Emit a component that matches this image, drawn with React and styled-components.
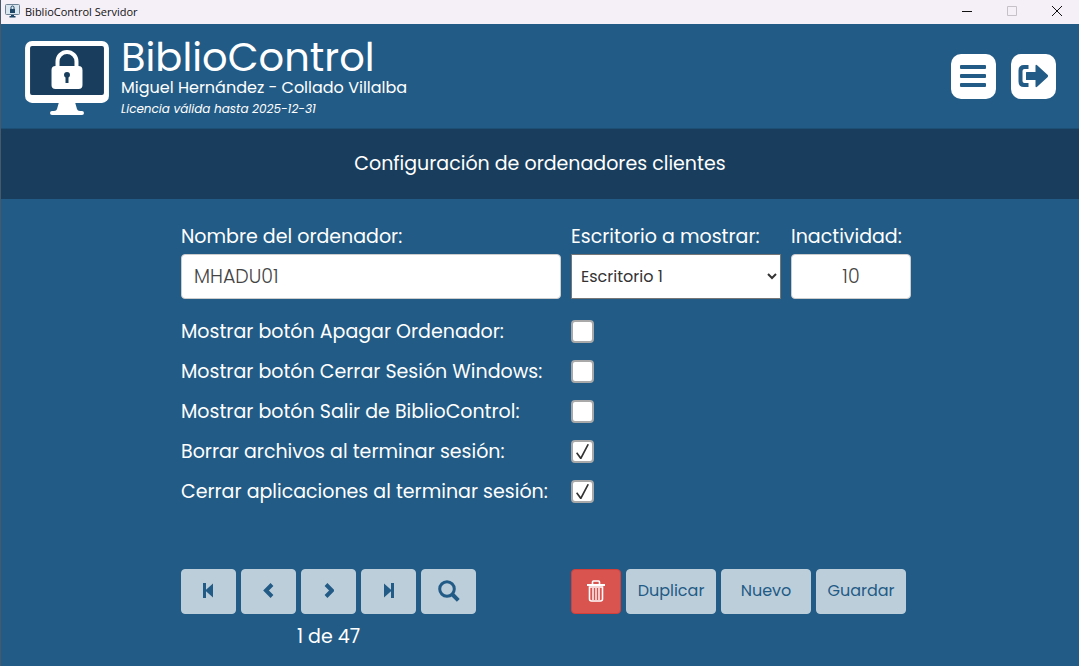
import React, { useState } from "react";
import styled, { createGlobalStyle } from "styled-components";

const GlobalStyle = createGlobalStyle`
  * {
    box-sizing: border-box;
  }

  body {
    margin: 0;
    background-color: #225b85;
    color: #ffffff;
    font-family: Poppins, Inter, "Open Sans", sans-serif;
  }

  button, input, select {
    font-family: inherit;
  }
`;

const Window = styled.div`
  min-height: 100vh;
  border-left: 1px solid #46586a;
  background-color: #225b85;
`;

const TitleBar = styled.div`
  height: 24px;
  padding: 0 0 2px 4px;
  display: flex;
  align-items: center;
  background-color: #f5eff7;
  color: #111111;
`;

const TitleText = styled.span`
  flex-grow: 1;
  margin-left: 5px;
  font-family: "Segoe UI", "Open Sans", "Noto Sans", sans-serif;
  font-size: 11px;
`;

const WindowButton = styled.button`
  width: 45px;
  height: 22px;
  padding: 0;
  display: flex;
  align-items: center;
  justify-content: center;
  border: none;
  background: none;
  color: ${({ disabled }) => (disabled ? "#c6c0c8" : "#111111")};
`;

const Header = styled.header`
  height: 105px;
  padding: 4px 23px 0 24px;
  display: flex;
  align-items: center;
  border-bottom: 1px solid #1d4f75;
`;

const Brand = styled.div`
  flex-grow: 1;
  margin-left: 12px;
`;

const BrandName = styled.h1`
  margin: 0;
  font-size: 40px;
  font-weight: 400;
  line-height: 42px;
`;

const Library = styled.p`
  margin: 0;
  font-size: 16px;
  line-height: 20px;
`;

const License = styled.p`
  margin: 0;
  font-size: 12px;
  font-style: italic;
  line-height: 22px;
`;

const HeaderActions = styled.nav`
  display: flex;
  gap: 15px;
  padding-bottom: 4px;
`;

const HeaderButton = styled.button`
  width: 45px;
  height: 45px;
  padding: 0 1px 0 0;
  display: flex;
  align-items: center;
  justify-content: center;
  border: none;
  border-radius: 10px;
  background-color: #ffffff;
  color: #225b85;
  cursor: pointer;
`;

const SectionTitle = styled.h2`
  height: 70px;
  margin: 0;
  padding-bottom: 2px;
  display: flex;
  align-items: center;
  justify-content: center;
  background-color: #193e5d;
  font-size: 19px;
  font-weight: 400;
`;

const Form = styled.form`
  max-width: 750px;
  margin: 0 auto;
  padding: 25px 4px 0 16px;
`;

const Fields = styled.div`
  display: grid;
  grid-template-columns: 38fr 21fr 12fr;
  gap: 10px;
`;

const Label = styled.label`
  font-size: 19px;
  line-height: 26px;
  white-space: nowrap;
`;

const Field = styled.div`
  min-width: 0;
  display: flex;
  flex-direction: column;
  gap: 4px;
`;

const TextInput = styled.input`
  width: 100%;
  height: 45px;
  padding: 0 12px;
  border: 1px solid #cccccc;
  border-radius: 4px;
  background-color: #ffffff;
  color: #444444;
  font-size: 19px;
  font-weight: 300;
  text-align: ${({ $align }) => $align || "left"};
`;

const Select = styled.select`
  width: 100%;
  height: 45px;
  padding: 0 0 0 5px;
  border: 1px solid #767676;
  border-radius: 0;
  background-color: #ffffff;
  color: #333333;
  font-size: 16px;
`;

const Options = styled.div`
  margin-top: 13px;
`;

const OptionRow = styled.div`
  height: 40px;
  padding-bottom: 1px;
  display: grid;
  grid-template-columns: 38fr 34fr;
  gap: 10px;
  align-items: center;
`;

const Checkbox = styled.input`
  appearance: none;
  width: 23px;
  height: 23px;
  margin: 0;
  display: grid;
  place-items: center;
  border: 2px solid #a9a9a9;
  border-radius: 4px;
  background-color: #ffffff;

  &:checked::before {
    content: "";
    width: 13px;
    height: 15px;
    background-color: #333333;
    clip-path: polygon(0 62%, 10% 55%, 36% 85%, 88% 0, 100% 3%, 42% 100%, 32% 100%);
  }
`;

const Footer = styled.div`
  margin-top: 57px;
  display: grid;
  grid-template-columns: 38fr 34fr;
  gap: 10px;
  align-items: start;
`;

const ButtonGroup = styled.div`
  display: flex;
  gap: 5px;
`;

const Button = styled.button`
  width: ${({ $width }) => $width || "90px"};
  height: 45px;
  padding: 0 0 2px;
  display: flex;
  align-items: center;
  justify-content: center;
  border: 1px solid ${({ $danger }) => ($danger ? "#d43f3a" : "#bdcedb")};
  border-radius: 4px;
  background-color: ${({ $danger }) => ($danger ? "#d9534f" : "#bdcedb")};
  color: ${({ $danger }) => ($danger ? "#ffffff" : "#225b85")};
  font-size: 16px;
  cursor: pointer;
`;

const Pager = styled.div`
  width: 295px;
`;

const Position = styled.p`
  margin: 10px 0 0;
  font-size: 19px;
  line-height: 26px;
  text-align: center;
`;

const Logo = ({ size, frame, screen }) => (
  <svg width={size} height={size * 0.88} viewBox="0 0 84 74" aria-hidden="true">
    <rect width="84" height="62" rx="7" fill={frame} />
    <rect x="5" y="5" width="74" height="49" rx="2" fill={screen} />
    <path d="M34 61h16l2 7q.5 2 3 2h2q2 0 2 2t-2 2H27q-2 0-2-2t2-2h2q2.500 0 3-2z" fill={frame} />
    <path d="M32.500 26v-5.500a9.500 9.500 0 0 1 19 0V26" fill="none" stroke={frame} strokeWidth="4" />
    <rect x="26.500" y="25" width="31" height="23" rx="4" fill={frame} />
    <path d="M42 31a3 3 0 0 0-3 3q0 1.600 1.500 2.600V42h3v-5.400Q45 35.600 45 34a3 3 0 0 0-3-3z" fill={screen} />
  </svg>
);

const SmallLogo = () => (
  <svg width="15" height="14" viewBox="0 0 15 14" aria-hidden="true">
    <rect x=".5" y=".5" width="14" height="10" rx="1" fill="#d9e6f0" stroke="#6d8294" />
    <path d="M6 5V3.500a1.500 1.500 0 0 1 3 0V5" fill="none" stroke="#1f4566" />
    <path d="M5 5h5v4H5zM6 11h3v1h1.500v1.500h-6V12H6z" fill="#1f4566" />
  </svg>
);

const MenuIcon = () => (
  <svg width="26" height="24" viewBox="0 0 26 24" fill="currentColor">
    <rect y="1" width="26" height="4" rx="1" />
    <rect y="10" width="26" height="4" rx="1" />
    <rect y="19" width="26" height="4" rx="1" />
  </svg>
);

const ExitIcon = () => (
  <svg width="30" height="24" viewBox="0 0 30 24" fill="currentColor">
    <path d="M10.500 1H6Q.500 1 .500 6.500v11Q.500 23 6 23h4.500v-4H6.500q-2 0-2-2V7q0-2 2-2h4z" />
    <path d="M8.500 8h9V2q0-2 1.600-.8L29.500 10.700q1.300 1.300 0 2.600L19.100 22.800q-1.600 1.200-1.600-.8v-6h-9Q8 16 8 15.500v-7Q8 8 8.500 8z" />
  </svg>
);

const FirstIcon = () => (
  <svg width="12" height="15" viewBox="0 0 12 15" fill="currentColor">
    <path d="M0 0h3v6.800L10 .5v14L3 8.200V15H0z" />
  </svg>
);

const LastIcon = () => (
  <svg width="10" height="15" viewBox="0 0 10 15" fill="currentColor">
    <path d="M10 0H7v6.800L0 .5v14l7-6.300V15h3z" />
  </svg>
);

const PrevIcon = () => (
  <svg width="12" height="15" viewBox="0 0 12 15" fill="none" stroke="currentColor" strokeWidth="4">
    <path d="m9 1.500-6 6 6 6" />
  </svg>
);

const NextIcon = () => (
  <svg width="10" height="15" viewBox="0 0 10 15" fill="none" stroke="currentColor" strokeWidth="4">
    <path d="m2 1.500 6 6-6 6" />
  </svg>
);

const SearchIcon = () => (
  <svg width="22" height="22" viewBox="0 0 22 22" fill="none" stroke="currentColor">
    <circle cx="9" cy="9" r="7.300" strokeWidth="3" />
    <path d="m14 14 6.300 6.300" strokeWidth="4" />
  </svg>
);

const TrashIcon = () => (
  <svg width="18" height="22" viewBox="0 0 18 22" fill="none" stroke="currentColor">
    <path d="M0 5h18" strokeWidth="2" />
    <path d="M5.500 4.500V2q0-1 1-1h5q1 0 1 1v2.500" strokeWidth="1.600" />
    <path d="M2.500 7v12q0 2 2 2h9q2 0 2-2V7z" strokeWidth="1.600" />
    <path d="M6 8v12M9 8v12M12 8v12" strokeWidth="1.400" />
  </svg>
);

const options = [
  { name: "apagar", text: "Mostrar botón Apagar Ordenador:", checked: false },
  { name: "cerrarSesion", text: "Mostrar botón Cerrar Sesión Windows:", checked: false },
  { name: "salir", text: "Mostrar botón Salir de BiblioControl:", checked: false },
  { name: "borrar", text: "Borrar archivos al terminar sesión:", checked: true },
  { name: "cerrarApps", text: "Cerrar aplicaciones al terminar sesión:", checked: true }
];

const pagerButtons = [
  { name: "Primero", icon: <FirstIcon /> },
  { name: "Anterior", icon: <PrevIcon /> },
  { name: "Siguiente", icon: <NextIcon /> },
  { name: "Último", icon: <LastIcon /> },
  { name: "Buscar", icon: <SearchIcon /> }
];

const App = () => {
  const [name, setName] = useState("MHADU01");
  const [timeout, setTimeoutValue] = useState("10");

  return (
    <Window>
      <GlobalStyle />
      <TitleBar>
        <SmallLogo />
        <TitleText>BiblioControl Servidor</TitleText>
        <WindowButton aria-label="Minimizar">
          <svg width="10" height="10" stroke="currentColor"><path d="M0 5.500h10" /></svg>
        </WindowButton>
        <WindowButton aria-label="Maximizar" disabled>
          <svg width="10" height="10" fill="none" stroke="currentColor"><path d="M.5.5h9v9h-9z" /></svg>
        </WindowButton>
        <WindowButton aria-label="Cerrar">
          <svg width="10" height="10" stroke="currentColor"><path d="m0 0 10 10M10 0 0 10" /></svg>
        </WindowButton>
      </TitleBar>
      <Header>
        <Logo size={84} frame="#ffffff" screen="#193e5d" />
        <Brand>
          <BrandName>BiblioControl</BrandName>
          <Library>Miguel Hernández - Collado Villalba</Library>
          <License>Licencia válida hasta 2025-12-31</License>
        </Brand>
        <HeaderActions>
          <HeaderButton aria-label="Menú"><MenuIcon /></HeaderButton>
          <HeaderButton aria-label="Salir"><ExitIcon /></HeaderButton>
        </HeaderActions>
      </Header>
      <SectionTitle>Configuración de ordenadores clientes</SectionTitle>
      <Form onSubmit={e => e.preventDefault()}>
        <Fields>
          <Field>
            <Label htmlFor="nombre">Nombre del ordenador:</Label>
            <TextInput id="nombre" value={name} onChange={e => setName(e.target.value)} />
          </Field>
          <Field>
            <Label htmlFor="escritorio">Escritorio a mostrar:</Label>
            <Select id="escritorio">
              <option>Escritorio 1</option>
            </Select>
          </Field>
          <Field>
            <Label htmlFor="inactividad">Inactividad:</Label>
            <TextInput
              id="inactividad"
              $align="center"
              value={timeout}
              onChange={e => setTimeoutValue(e.target.value)}
            />
          </Field>
        </Fields>
        <Options>
          {options.map(item => (
            <OptionRow key={item.name}>
              <Label htmlFor={item.name}>{item.text}</Label>
              <Checkbox type="checkbox" id={item.name} defaultChecked={item.checked} />
            </OptionRow>
          ))}
        </Options>
        <Footer>
          <Pager>
            <ButtonGroup>
              {pagerButtons.map(item => (
                <Button type="button" key={item.name} aria-label={item.name} $width="55px">
                  {item.icon}
                </Button>
              ))}
            </ButtonGroup>
            <Position>1 de 47</Position>
          </Pager>
          <ButtonGroup>
            <Button type="button" aria-label="Eliminar" $width="50px" $danger>
              <TrashIcon />
            </Button>
            <Button type="button">Duplicar</Button>
            <Button type="button">Nuevo</Button>
            <Button type="submit">Guardar</Button>
          </ButtonGroup>
        </Footer>
      </Form>
    </Window>
  );
};

export default App;
